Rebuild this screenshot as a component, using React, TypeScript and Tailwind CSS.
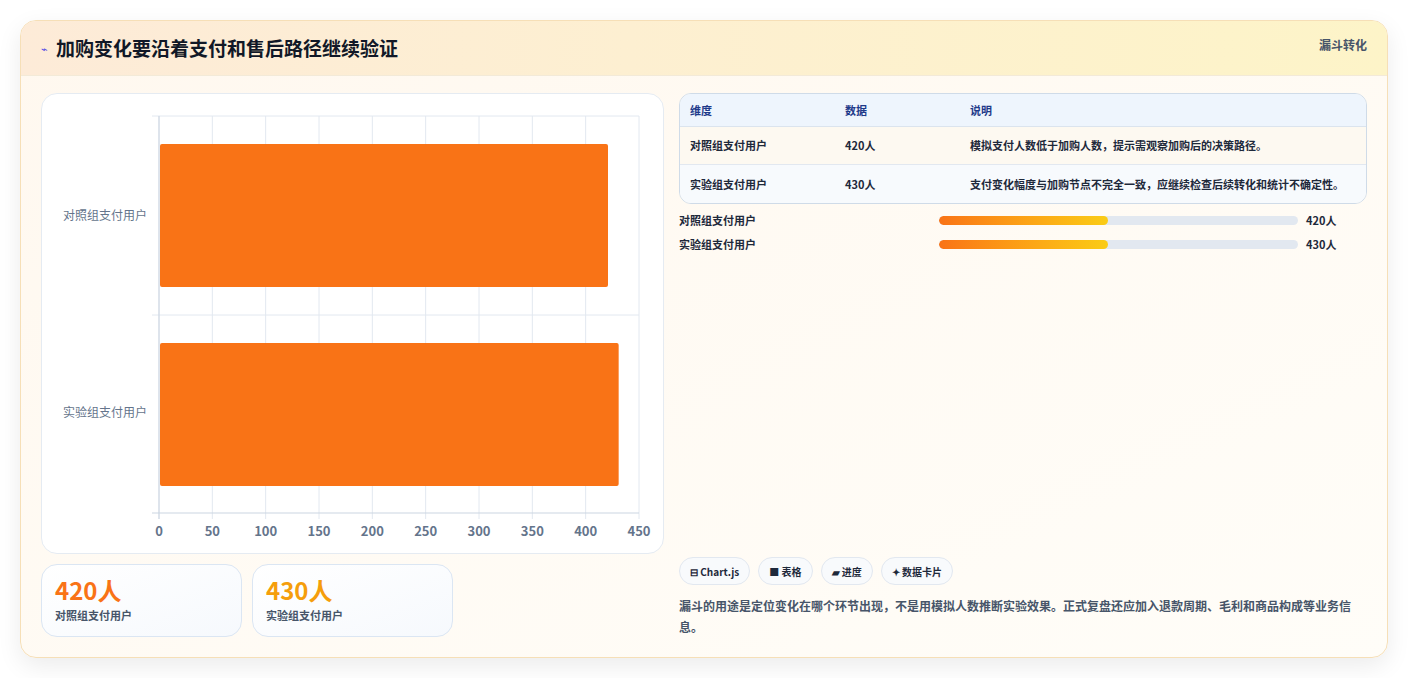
const font = { fontFamily: '"Noto Sans CJK SC", "Noto Sans", sans-serif' };

const rows = [
  { name: '对照组支付用户', value: '420人', note: '模拟支付人数低于加购人数，提示需观察加购后的决策路径。' },
  { name: '实验组支付用户', value: '430人', note: '支付变化幅度与加购节点不完全一致，应继续检查后续转化和统计不确定性。' },
];

function BarChart() {
  const left = 117;
  const right = 597;
  const top = 22;
  const bottom = 419;
  const step = (right - left) / 9;
  const ticks = [0, 50, 100, 150, 200, 250, 300, 350, 400, 450];
  const w = (v: number) => ((right - left) * v) / 450;
  return (
    <svg width="623" height="461" className="block">
      {ticks.map((t, i) => (
        <line key={t} x1={left + i * step} x2={left + i * step} y1={top} y2={bottom + 6} stroke="#e2e8f0" />
      ))}
      <line x1={110} x2={right} y1={top} y2={top} stroke="#e2e8f0" />
      <line x1={110} x2={right} y1={221} y2={221} stroke="#e2e8f0" />
      <line x1={110} x2={right} y1={bottom} y2={bottom} stroke="#cbd5e1" />
      <line x1={left} x2={left} y1={top} y2={bottom + 6} stroke="#cbd5e1" />
      <rect x={left + 1} y={50} width={w(420)} height={143} rx={2} fill="#f97316" />
      <rect x={left + 1} y={249} width={w(430)} height={143} rx={2} fill="#f97316" />
      <text x={105} y={126} textAnchor="end" fontSize="12" fill="#64748b" style={font}>对照组支付用户</text>
      <text x={105} y={323} textAnchor="end" fontSize="12" fill="#64748b" style={font}>实验组支付用户</text>
      {ticks.map((t, i) => (
        <text key={t} x={left + i * step} y={442} textAnchor="middle" fontSize="13" fontWeight="600" fill="#64748b" style={font}>{t}</text>
      ))}
    </svg>
  );
}

export default function App() {
  return (
    <div className="min-h-[678px] bg-white p-5" style={font}>
      <div className="rounded-2xl border border-[#f6dfb7] shadow-[0_8px_24px_rgba(0,0,0,0.08)] overflow-hidden bg-gradient-to-br from-[#fff8ef] to-[#fffdf8]">
        <div className="h-[55px] flex items-center justify-between pl-5 pr-5 border-b border-[#f3ead8] bg-gradient-to-r from-[#fdebd8] to-[#fdf4c8]">
          <div className="flex items-center gap-2">
            <span className="text-[11px] text-[#4f46e5]">⌁</span>
            <h1 className="text-[19px] font-bold text-[#111827]">加购变化要沿着支付和售后路径继续验证</h1>
          </div>
          <span className="text-[12px] font-bold text-[#475569] self-start mt-[15px]">漏斗转化</span>
        </div>
        <div className="flex gap-[15px] p-5 pt-[17px]">
          <div className="w-[623px] flex flex-col gap-[10px]">
            <div className="h-[461px] bg-white rounded-2xl border border-[#e5ebf2]">
              <BarChart />
            </div>
            <div className="flex gap-[10px]">
              {[
                { v: '420人', l: '对照组支付用户', c: 'text-[#f97316]' },
                { v: '430人', l: '实验组支付用户', c: 'text-[#f59e0b]' },
              ].map((s) => (
                <div key={s.l} className="w-[201px] h-[73px] rounded-2xl border border-[#dbe6f3] bg-gradient-to-br from-white to-[#f6f9fd] px-[13px] pt-[10px]">
                  <div className={`text-[24px] font-bold leading-[30px] ${s.c}`}>{s.v}</div>
                  <div className="text-[11px] font-semibold text-[#475569] mt-[2px]">{s.l}</div>
                </div>
              ))}
            </div>
          </div>
          <div className="flex-1 flex flex-col">
            <div className="rounded-xl border border-[#cfdbe8] overflow-hidden text-[11px] font-semibold text-[#1e293b]">
              <div className="flex h-[33px] items-center bg-[#eef5fd] text-[#1e3a8a] border-b border-[#dbe4ee]">
                <div className="w-[165px] pl-[10px]">维度</div>
                <div className="w-[125px]">数据</div>
                <div className="flex-1">说明</div>
              </div>
              <div className="flex py-[10px] bg-[#fdf9f1] border-b border-[#e2e8f0]">
                <div className="w-[165px] pl-[10px]">{rows[0].name}</div>
                <div className="w-[125px]">{rows[0].value}</div>
                <div className="flex-1 pr-[10px]">{rows[0].note}</div>
              </div>
              <div className="flex py-[10px] bg-[#f7fafd] leading-[18px]">
                <div className="w-[165px] pl-[10px]">{rows[1].name}</div>
                <div className="w-[125px]">{rows[1].value}</div>
                <div className="flex-1 pr-[10px]">{rows[1].note}</div>
              </div>
            </div>
            <div className="mt-[8px] flex flex-col gap-[7px]">
              {rows.map((r) => (
                <div key={r.name} className="flex items-center h-[17px] text-[11px] font-semibold text-[#1e293b]">
                  <div className="w-[260px]">{r.name}</div>
                  <div className="w-[359px] h-[9px] rounded-full bg-[#e2e8f0] overflow-hidden">
                    <div className="h-full w-[47%] rounded-full bg-gradient-to-r from-[#f97316] to-[#facc15]" />
                  </div>
                  <div className="ml-[8px] font-bold">{r.value}</div>
                </div>
              ))}
            </div>
            <div className="mt-auto flex gap-[8px]">
              {['⊟ Chart.js', '■ 表格', '▰ 进度', '✦ 数据卡片'].map((c) => (
                <span key={c} className="h-[28px] px-[10px] flex items-center rounded-full border border-[#e2e8f0] bg-[#f8fafc] text-[10px] font-semibold text-[#1e293b]">{c}</span>
              ))}
            </div>
            <p className="mt-[10px] text-[12px] leading-[21px] font-semibold text-[#475569]">
              漏斗的用途是定位变化在哪个环节出现，不是用模拟人数推断实验效果。正式复盘还应加入退款周期、毛利和商品构成等业务信息。
            </p>
          </div>
        </div>
      </div>
    </div>
  );
}
